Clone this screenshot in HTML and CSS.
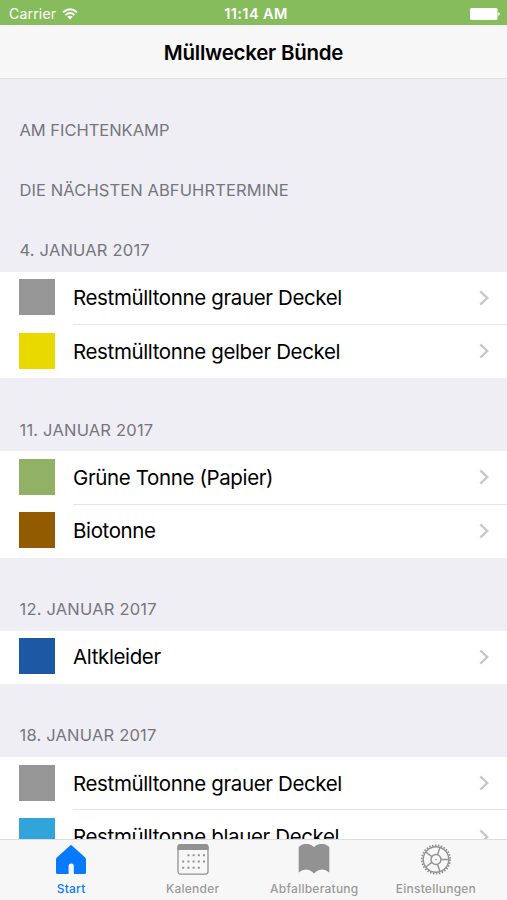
FILE: index.html
```html
<!DOCTYPE html>
<html lang="de">
<head>
<meta charset="utf-8">
<title>Müllwecker Bünde</title>
<link rel="stylesheet" href="styles.css">
</head>
<body>
<div class="app">
  <div class="status">
    <div class="carrier"><span>Carrier</span>
      <svg width="16" height="12" viewBox="0 0 16 12" fill="none" stroke="#fff" stroke-width="1.800"><path d="M1 4.400Q8-1.800 15 4.400M3.500 7Q8 3 12.500 7"/><path d="M5.300 8.700Q8 6.600 10.700 8.700L8 11.600Z" fill="#fff" stroke="none"/></svg>
    </div>
    <div class="time">11:14 AM</div>
    <div class="battery"><svg width="30" height="12" viewBox="0 0 30 12" fill="#fff"><rect width="27.500" height="12" rx="1.500"/><path d="M28.300 4Q29.800 4.500 29.800 6T28.300 8Z"/></svg></div>
  </div>
  <header class="nav"><h1>Müllwecker Bünde</h1></header>
  <main class="list">
    <h2 class="head first"><span class="place">AM FICHTENKAMP</span></h2>
    <h2 class="head short"><span class="intro">DIE NÄCHSTEN ABFUHRTERMINE</span></h2>
    <h2 class="head short"><span>4. JANUAR 2017</span></h2>
    <ul class="rows">
      <li><i class="sw gray"></i><div class="cell"><span>Restmülltonne grauer Deckel</span><svg class="chev" viewBox="0 0 10 16"><path d="M1.300 1.300L8.200 8L1.300 14.700"/></svg></div></li>
      <li><i class="sw yellow"></i><div class="cell"><span>Restmülltonne gelber Deckel</span><svg class="chev" viewBox="0 0 10 16"><path d="M1.300 1.300L8.200 8L1.300 14.700"/></svg></div></li>
    </ul>
    <h2 class="head"><span>11. JANUAR 2017</span></h2>
    <ul class="rows">
      <li><i class="sw green"></i><div class="cell"><span>Grüne Tonne (Papier)</span><svg class="chev" viewBox="0 0 10 16"><path d="M1.300 1.300L8.200 8L1.300 14.700"/></svg></div></li>
      <li><i class="sw brown"></i><div class="cell"><span>Biotonne</span><svg class="chev" viewBox="0 0 10 16"><path d="M1.300 1.300L8.200 8L1.300 14.700"/></svg></div></li>
    </ul>
    <h2 class="head"><span>12. JANUAR 2017</span></h2>
    <ul class="rows">
      <li><i class="sw blue"></i><div class="cell"><span>Altkleider</span><svg class="chev" viewBox="0 0 10 16"><path d="M1.300 1.300L8.200 8L1.300 14.700"/></svg></div></li>
    </ul>
    <h2 class="head"><span>18. JANUAR 2017</span></h2>
    <ul class="rows">
      <li><i class="sw gray"></i><div class="cell"><span>Restmülltonne grauer Deckel</span><svg class="chev" viewBox="0 0 10 16"><path d="M1.300 1.300L8.200 8L1.300 14.700"/></svg></div></li>
      <li><i class="sw cyan"></i><div class="cell"><span>Restmülltonne blauer Deckel</span><svg class="chev" viewBox="0 0 10 16"><path d="M1.300 1.300L8.200 8L1.300 14.700"/></svg></div></li>
    </ul>
  </main>
  <nav class="tabs">
    <a class="tab active"><svg width="32" height="32" viewBox="0 0 32 32"><path fill="currentColor" d="M16 .8L30.200 13.500Q31 14.300 31 15.500V28.500Q31 30 29.500 30H18.800V21.500Q18.800 19.500 16.200 19.500T13.600 21.500V30H2.500Q1 30 1 28.500V15.500Q1 14.300 1.800 13.500Z"/></svg><span>Start</span></a>
    <a class="tab"><svg width="32" height="32" viewBox="0 0 32 32"><rect x="1" y=".6" width="30" height="29.500" rx="2.500" fill="none" stroke="currentColor" stroke-width="1.300"/><path fill="currentColor" d="M.5 6V3Q.5 0 3.500 0H28.500Q31.500 0 31.500 3V6Z"/><g stroke="currentColor" stroke-width="2" stroke-dasharray="2 3.200"><path d="M10.400 11.300H28M5.200 17.500H28M5.200 23.700H23"/></g></svg><span>Kalender</span></a>
    <a class="tab"><svg width="32" height="32" viewBox="0 0 32 32"><path fill="currentColor" d="M.7 3Q8-3.500 16 3Q24-3.500 31.300 3V28.500Q26 24 21 26Q18 27 16 29.500Q14 27 11 26Q6 24 .7 28.500Z"/></svg><span>Abfallberatung</span></a>
    <a class="tab"><svg width="32" height="32" viewBox="0 0 32 32" fill="none" stroke="currentColor"><circle cx="16" cy="15.500" r="12.800" stroke-width="1.400"/><circle cx="16" cy="15.500" r="14.200" stroke-width="1.800" stroke-dasharray="1.487 1.487"/><circle cx="16" cy="15.500" r="5" stroke-width="1.400"/><circle cx="16" cy="15.500" r=".8" fill="currentColor" stroke="none"/><path stroke-width="1.400" d="M21 15.500H28.800M17.500 10.700L20 3.300M17.500 20.300L20 27.700M12 12.600L5.600 8M12 18.400L5.600 23"/></svg><span>Einstellungen</span></a>
  </nav>
</div>
</body>
</html>
```
FILE: styles.css
```css
* { box-sizing: border-box; }
body { margin: 0; font-family: Inter, "Liberation Sans", sans-serif; }
.app { width: 507px; height: 900px; display: flex; flex-direction: column; overflow: hidden; background: #efeef4; }
.status { flex: none; height: 25px; background: #87bc5c; color: #fff; display: grid; grid-template-columns: 1fr auto 1fr; align-items: center; padding: 2px 7px 0 9px; font-size: 14px; }
.carrier { display: flex; align-items: center; gap: 6px; letter-spacing: .2px; }
.time { font-weight: 600; font-size: 14.500px; letter-spacing: .4px; padding-left: 3px; }
.battery { display: flex; justify-content: flex-end; }
.status svg { display: block; }
.nav { flex: none; height: 54px; background: #f7f7f7; border-bottom: 1px solid #e0e0e2; display: flex; align-items: center; justify-content: center; padding-top: 1px; }
h1 { margin: 0; font-size: 20.500px; font-weight: 600; letter-spacing: -.25px; }
.list { flex: 1; min-height: 0; overflow: hidden; }
.head { margin: 0; height: 72.800px; padding: 0 19.500px 11.500px; display: flex; align-items: flex-end; font-size: 16.500px; line-height: 20px; font-weight: 400; letter-spacing: .2px; color: #76767b; }
.head.first { height: 72.600px; }
.head.short { height: 60px; }
.place { letter-spacing: -.03px; }
.intro { letter-spacing: .1px; }
.rows { margin: 0; padding: 0; list-style: none; background: #fff; }
.rows li { height: 53.400px; display: flex; align-items: center; padding-left: 19px; }
.sw { width: 36px; height: 36px; margin-right: 18px; margin-bottom: 2px; }
.cell { flex: 1; height: 100%; display: flex; align-items: center; justify-content: space-between; padding: 0 18.500px 0 0; border-bottom: 1px solid #e5e5e8; font-size: 20.500px; letter-spacing: -.37px; }
.rows li:last-child .cell { border-bottom-color: transparent; }
.chev { width: 10px; height: 16px; fill: none; stroke: #c7c7cc; stroke-width: 2.400; }
.gray { background: #969696; }
.yellow { background: #e9d900; }
.green { background: #91b164; }
.brown { background: #935b00; }
.blue { background: #1c58a4; }
.cyan { background: #31a5d9; }
.tabs { flex: none; height: 61px; border-top: 1px solid #dcdcdd; background: #f7f7f7; display: grid; grid-template-columns: repeat(4, 121.600px); justify-content: center; }
.tab { display: flex; flex-direction: column; align-items: center; padding-top: 4px; color: #929292; font-size: 12px; font-weight: 500; letter-spacing: .25px; }
.tab svg { display: block; }
.tab span { margin-top: 5px; line-height: 15px; color: #9a9a9a; }
.tab.active, .tab.active span { color: #087aff; }
```
